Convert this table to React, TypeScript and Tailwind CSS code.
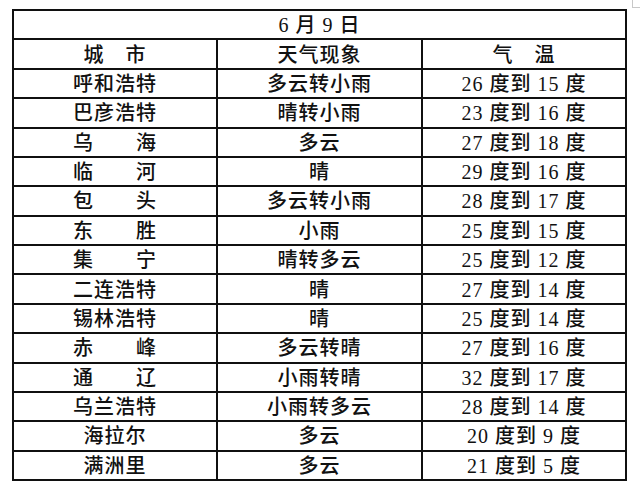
import React from "react";

const rows: [string, string, string][] = [
  ["呼和浩特", "多云转小雨", "26 度到 15 度"],
  ["巴彦浩特", "晴转小雨", "23 度到 16 度"],
  ["乌\u3000\u3000海", "多云", "27 度到 18 度"],
  ["临\u3000\u3000河", "晴", "29 度到 16 度"],
  ["包\u3000\u3000头", "多云转小雨", "28 度到 17 度"],
  ["东\u3000\u3000胜", "小雨", "25 度到 15 度"],
  ["集\u3000\u3000宁", "晴转多云", "25 度到 12 度"],
  ["二连浩特", "晴", "27 度到 14 度"],
  ["锡林浩特", "晴", "25 度到 14 度"],
  ["赤\u3000\u3000峰", "多云转晴", "27 度到 16 度"],
  ["通\u3000\u3000辽", "小雨转晴", "32 度到 17 度"],
  ["乌兰浩特", "小雨转多云", "28 度到 14 度"],
  ["海拉尔", "多云", "20 度到 9 度"],
  ["满洲里", "多云", "21 度到 5 度"],
];

const cell =
  "bg-white flex items-center justify-center whitespace-pre text-[20px] leading-none tracking-[1px] text-[#111111] font-medium pt-[1px]";

export default function App() {
  return (
    <div className="relative w-[640px] h-[497px] bg-white font-['Liberation_Serif','Noto_Sans_CJK_SC',serif] overflow-hidden">
      <div className="absolute right-0 top-0 w-[8px] h-[8px] border-l border-b border-[#c8c8c8]" />
      <div className="pt-[9px] pl-[12px]">
        <div className="w-[615px] h-[472px] bg-[#101010] p-[2px] grid grid-cols-[202px_203px_202px] grid-rows-[repeat(16,minmax(0,1fr))] gap-[2px]">
          <div className={`${cell} col-span-3`}>6 月 9 日</div>
          <div className={cell}>城{"\u3000"}市</div>
          <div className={cell}>天气现象</div>
          <div className={cell}>气{"\u3000"}温</div>
          {rows.map((r, i) => (
            <React.Fragment key={i}>
              <div className={cell}>{r[0]}</div>
              <div className={cell}>{r[1]}</div>
              <div className={cell}>{r[2]}</div>
            </React.Fragment>
          ))}
        </div>
      </div>
    </div>
  );
}
